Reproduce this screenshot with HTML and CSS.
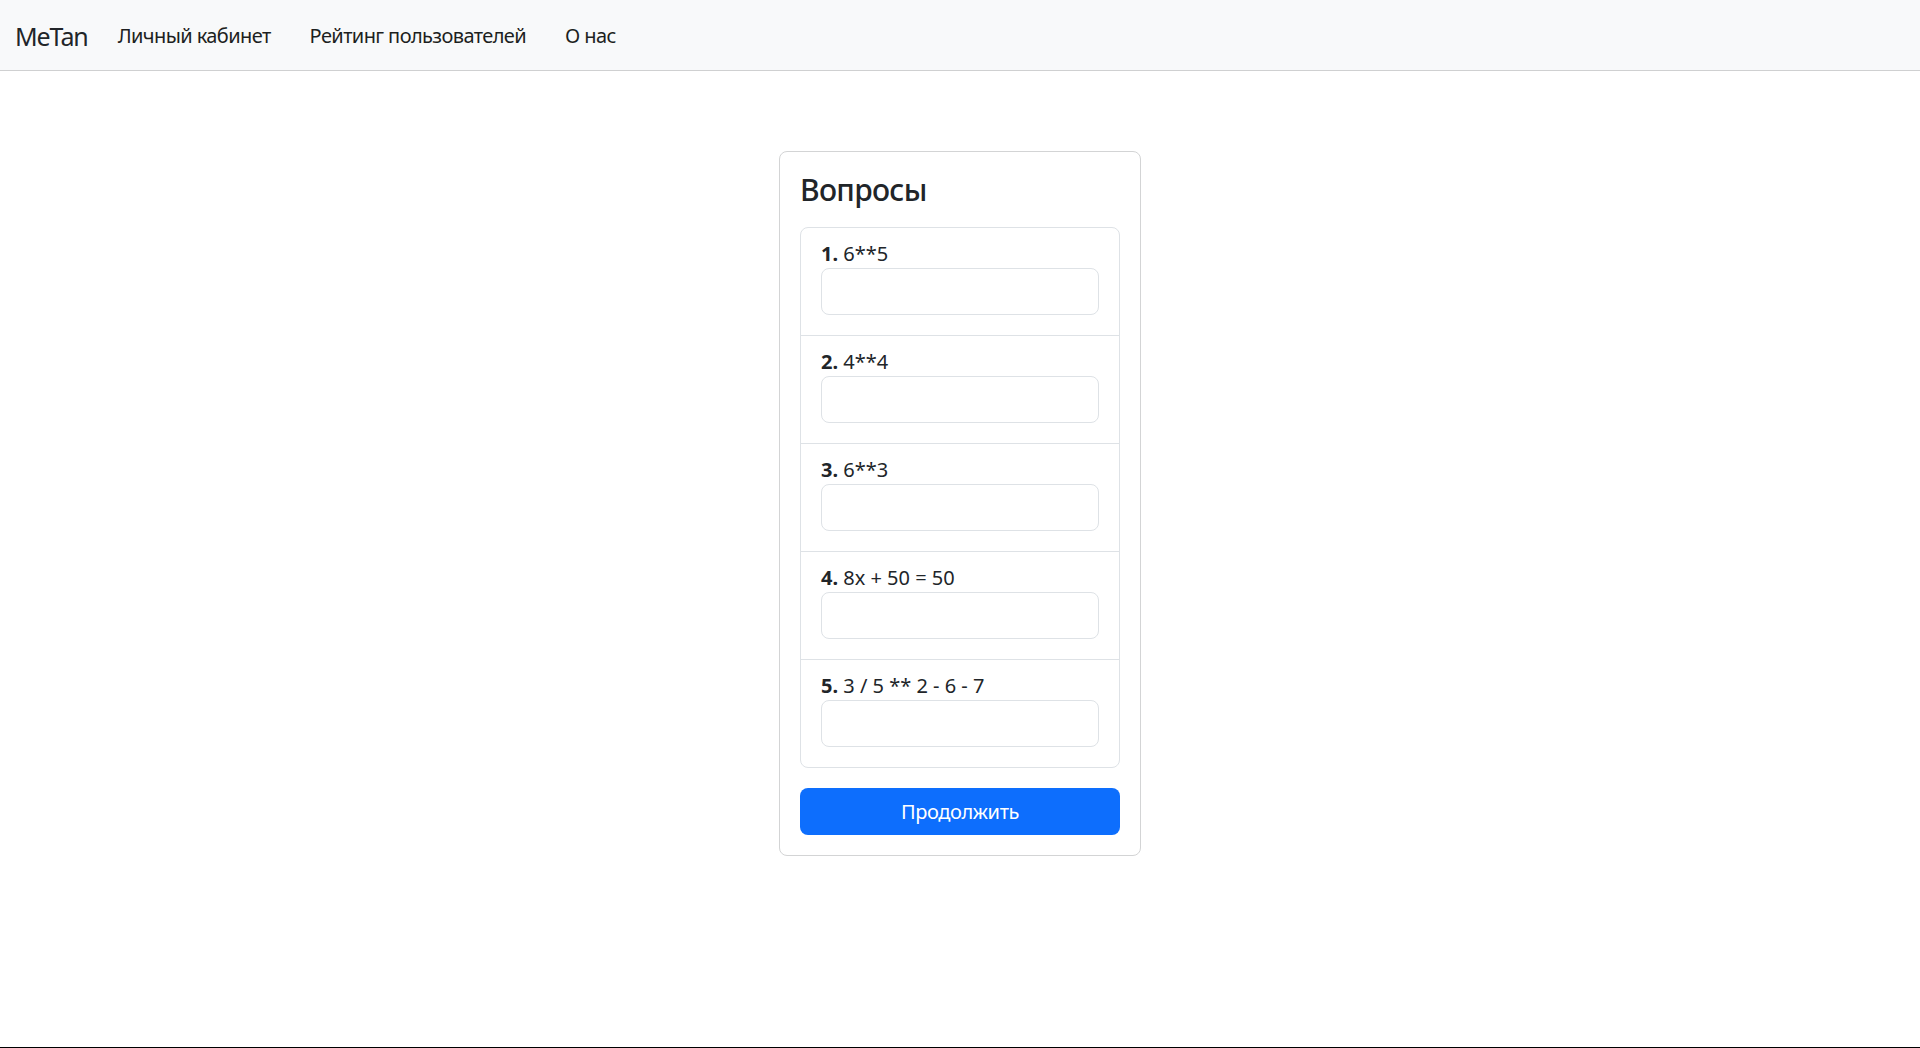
FILE: index.html
```html
<!DOCTYPE html>
<html lang="ru">
<head>
<meta charset="utf-8">
<title>MeTan</title>
<link rel="stylesheet" href="styles.css">
</head>
<body>
<nav class="navbar">
  <a class="brand" href="#">MeTan</a>
  <ul class="nav">
    <li><a class="nav-link" href="#">Личный кабинет</a></li>
    <li><a class="nav-link" href="#">Рейтинг пользователей</a></li>
    <li><a class="nav-link" href="#">О нас</a></li>
  </ul>
</nav>
<main class="main">
  <form class="card">
    <h4 class="card-title">Вопросы</h4>
    <ol class="list-group">
      <li class="list-item">
        <label class="q-label"><b>1.</b> 6**5</label>
        <input class="form-control" type="text">
      </li>
      <li class="list-item">
        <label class="q-label"><b>2.</b> 4**4</label>
        <input class="form-control" type="text">
      </li>
      <li class="list-item">
        <label class="q-label"><b>3.</b> 6**3</label>
        <input class="form-control" type="text">
      </li>
      <li class="list-item">
        <label class="q-label"><b>4.</b> 8x + 50 = 50</label>
        <input class="form-control" type="text">
      </li>
      <li class="list-item">
        <label class="q-label"><b>5.</b> 3 / 5 ** 2 - 6 - 7</label>
        <input class="form-control" type="text">
      </li>
    </ol>
    <button class="btn" type="button">Продолжить</button>
  </form>
</main>
<div class="bottom-line"></div>
</body>
</html>
```

FILE: styles.css
```css
* { box-sizing: border-box; }
html, body { margin: 0; padding: 0; }
body {
  font-family: "Noto Sans", "Open Sans", "DejaVu Sans", sans-serif;
  font-size: 20px;
  line-height: 30px;
  color: #212529;
  background: #fff;
  min-height: 100vh;
  display: flex;
  flex-direction: column;
}
a { text-decoration: none; color: inherit; }

.navbar {
  height: 71px;
  background: #f8f9fa;
  border-bottom: 1px solid #cfd0d1;
  display: flex;
  align-items: center;
  padding: 1px 15px 0;
}
.brand {
  font-size: 25px;
  line-height: 36px;
  color: #212529;
  margin-right: 20px;
  letter-spacing: -1.1px;
}
.nav {
  list-style: none;
  display: flex;
  gap: 19px;
  margin: 0;
  padding: 0;
}
.nav-link {
  display: block;
  padding: 10px 10px;
  color: #1d1f21;
  letter-spacing: -0.6px;
}

.main {
  flex: 1;
  display: flex;
  justify-content: center;
  padding-top: 80px;
}
.card {
  width: 362px;
  align-self: flex-start;
  border: 1px solid #d3d4d5;
  border-radius: 8px;
  padding: 20px;
  background: #fff;
  margin: 0;
}
.card-title {
  margin: 0 0 19px;
  font-size: 30px;
  line-height: 36px;
  font-weight: 500;
  letter-spacing: -0.7px;
}
.list-group {
  list-style: none;
  margin: 0;
  padding: 0;
  border: 1px solid #dee2e6;
  border-radius: 8px;
}
.list-item {
  padding: 10px 20px;
  border-top: 1px solid #dee2e6;
}
.list-item:first-child { border-top: none; }
.q-label {
  display: block;
  height: 30px;
  padding-top: 1px;
}
.q-label b { font-weight: 700; }
.form-control {
  display: block;
  width: 100%;
  height: 47px;
  margin: 0 0 10px;
  padding: 7px 15px;
  font: inherit;
  border: 1px solid #dee2e6;
  border-radius: 8px;
  background: #fff;
  outline: none;
}
.btn {
  display: block;
  width: 100%;
  height: 47px;
  margin-top: 20px;
  border: none;
  border-radius: 8px;
  background: #0d6efd;
  color: #fff;
  font: inherit;
  letter-spacing: -0.4px;
  cursor: pointer;
}
.bottom-line {
  height: 1px;
  background: #000;
}
```
